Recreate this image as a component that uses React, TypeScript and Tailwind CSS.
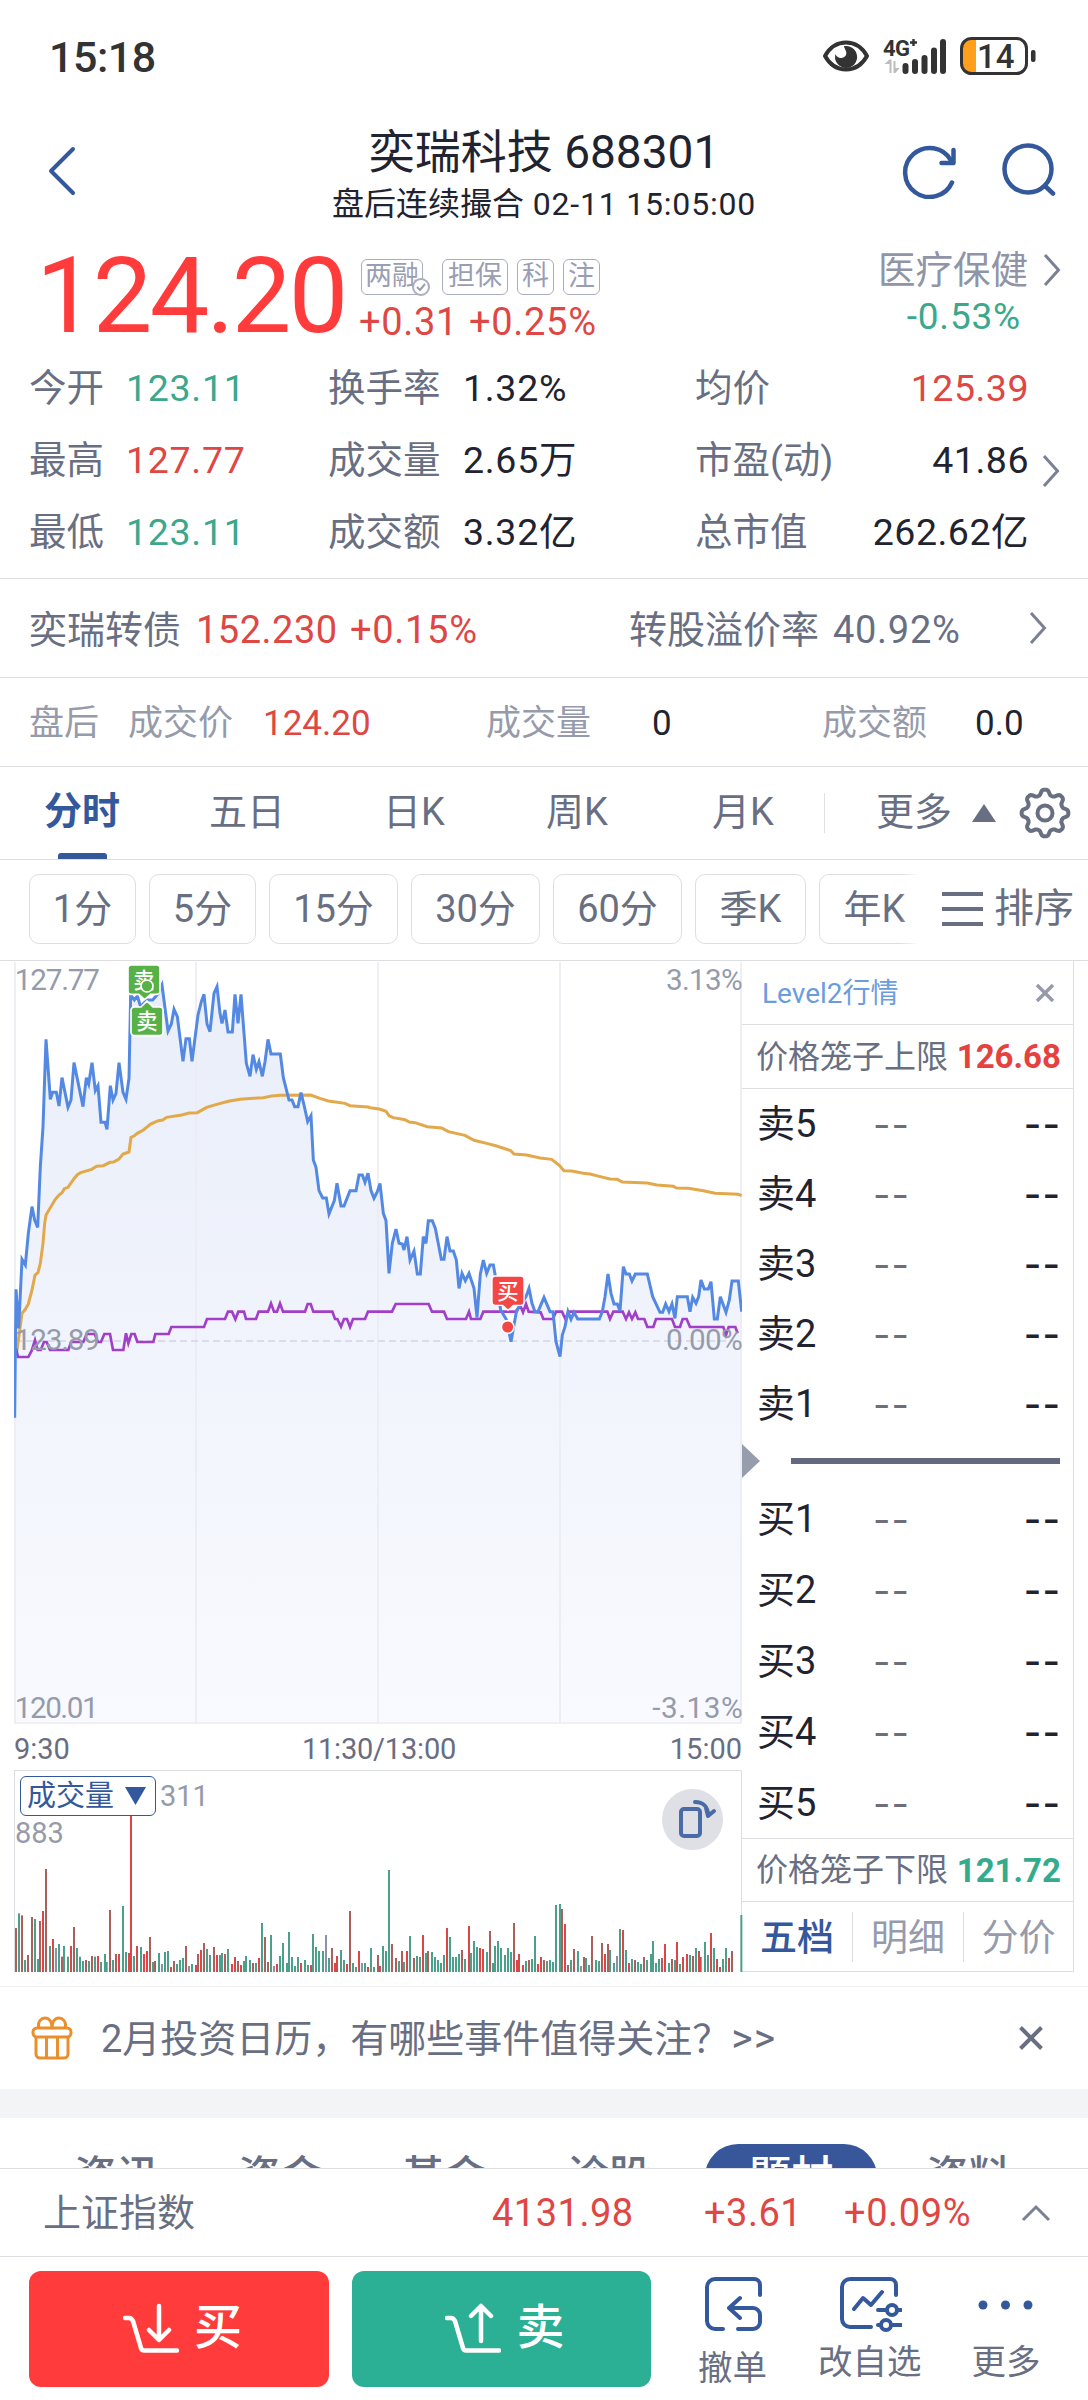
import { FC, ReactNode } from "react";

const morningPrice =
  "44,1403 48,1018 56,1135 66,928 76,945 85,850 96,770 104,810 113,832 121,650 129,530 138,268 151,448 158,427 169,427 177,468 186,383 204,472 213,450 222,338 249,470 259,383 266,402 276,338 286,422 294,407 303,517 315,517 321,538 331,407 339,450 348,430 357,338 369,427 378,448 387,385 392,135 403,150 412,138 422,170 440,150 458,150 475,130 486,105 504,243 514,222 522,178 532,200 549,334 558,266 568,266 576,334 594,195 604,155 612,133 621,222 630,245 642,130 651,110 660,190 666,220 675,180 684,246 697,246 705,133 714,220 723,133 739,340 750,379 759,314 769,358 777,335 787,379 795,335 804,268 813,312 841,312 850,383 867,450 876,450 884,470 894,470 903,428 912,465 923,515 933,497 940,630 948,652 957,722 968,744 979,744 987,792 1003,752 1011,700 1023,768 1032,768 1050,722 1068,722 1077,675 1087,675 1095,697 1104,670 1113,722";
const noonPrice =
  "12,745 22,725 30,700 40,790 48,812 57,970 67,880 78,837 87,880 97,882 102,900 111,860 120,930 132,903 142,972 151,972 160,860 168,880 175,812 187,812 196,835 214,928 222,928 231,860 240,903 250,903 259,930 267,1015 276,970 286,992 297,970 312,1015 321,1103 331,972 340,930 350,970 360,945 370,945 380,1000 392,1080 410,1110 423,1175 440,1080 455,1060 468,1040 477,1015 486,1060 495,1085 504,1085 522,1042 540,1085 549,1085 558,1175 570,1220 577,1155 585,1130 594,1085 603,1108 612,1087 623,1107 688,1107 697,1085 705,1040 714,972 723,1030 732,1062 742,1062 750,1083 760,950 768,972 778,972 786,993 796,972 832,972 848,1040 870,1087 878,1087 887,1062 897,1085 906,1062 915,1105 922,1040 952,1040 960,1085 968,1042 978,1060 986,1040 993,990 1003,1017 1015,1017 1023,995 1033,1107 1042,1107 1051,1040 1068,1087 1078,1050 1086,993 1105,993 1115,1085";
const morningAvg =
  "50,1205 58,1150 66,1090 76,1078 85,1062 96,1020 105,975 114,968 121,940 129,880 134,820 138,795 150,775 166,748 177,735 186,728 193,716 204,712 222,686 232,674 242,668 275,658 290,649 310,647 330,637 340,636 357,627 369,612 387,606 393,562 402,558 412,550 430,540 452,522 475,512 488,510 500,502 545,495 568,489 592,488 620,472 650,463 685,454 720,448 760,445 790,443 815,438 840,436 932,435 960,445 985,453 1035,460 1050,467 1105,471";
const noonAvg =
  "0,473 28,477 48,484 58,498 70,503 105,509 118,516 135,518 172,530 215,534 235,545 285,556 312,571 350,580 380,588 422,602 432,612 470,615 510,624 545,628 568,646 582,662 605,663 640,670 660,672 700,682 720,687 742,688 757,696 832,699 860,705 910,709 920,714 955,715 1000,722 1035,730 1105,733 1115,737";
const morningIndex =
  "48,1195 54,1221 85,1221 95,1202 105,1170 113,1200 122,1200 132,1176 140,1176 150,1200 205,1200 213,1176 250,1176 260,1152 284,1152 294,1176 303,1176 313,1152 330,1152 339,1200 370,1200 378,1150 385,1180 394,1152 404,1152 412,1176 460,1176 466,1152 506,1152 514,1131 612,1131 621,1107 675,1107 684,1085 696,1085 706,1108 715,1085 732,1085 738,1107 768,1107 776,1085 804,1085 813,1060 822,1085 831,1085 840,1060 849,1085 915,1085 923,1062 932,1062 940,1085 997,1085 1005,1107 1012,1107 1023,1130 1032,1107 1041,1107 1050,1131 1059,1107 1095,1107 1104,1085";
const noonIndex =
  "0,1085 66,1085 77,1062 176,1062 186,1085 222,1085 231,1107 288,1107 297,1085 303,1107 331,1107 340,1085 440,1085 450,1065 459,1087 468,1062 476,1085 512,1087 520,1107 549,1107 558,1085 576,1085 586,1107 596,1085 712,1085 720,1107 730,1085 758,1085 768,1107 777,1087 786,1107 796,1087 804,1107 823,1107 832,1131 850,1131 858,1107 906,1107 915,1131 930,1131 938,1107 950,1107 960,1131 1060,1131 1068,1155 1076,1131 1096,1131 1103,1150";

// r/d: up minutes, g: down minutes, n: flat
const morningVolume =
  "48,744d 57,700g 66,706d 75,840g 84,825d 96,711d 105,717g 114,837g 120,723d 129,693r 138,567d 150,798g 159,777r 168,804n 177,792g 186,830d 192,798g 204,830g 213,798r 222,741d 231,804g 240,830g 249,843g 258,840d 267,843g 276,828d 285,830g 294,828r 303,846g 315,822g 320,846g 330,690d 339,840g 348,822d 357,822r 369,678g 378,816g 387,819r 393,400r 402,828g 411,798r 423,801g 432,822r 441,813r 450,771d 459,846g 465,843d 477,819g 486,852n 495,816g 504,813g 513,861r 522,843d 531,852g 540,840g 549,834g 558,798d 567,858n 576,852g 588,855r 594,822d 603,810r 612,789d 621,807g 630,825g 642,801d 651,825r 660,825g 666,819g 675,822d 684,807g 696,852r 705,831r 714,843d 723,855r 732,843g 738,828g 750,840g 759,849d 768,849g 777,834r 786,729g 795,771d 804,846d 813,765g 822,858n 831,852r 840,828g 849,789g 861,849g 867,756g 876,831g 885,858g 894,831g 903,849r 915,840g 924,855g 933,855r 939,762g 948,801g 957,813g 969,813g 978,765n 987,834g 996,804d 1005,849r 1011,828r 1023,810g 1032,840g 1041,852r 1050,693d 1059,849g 1068,861g 1077,813r 1086,849n 1095,849g 1104,861r";
const noonVolume =
  "3,804g 12,861g 24,825d 30,858r 39,798g 48,813g 57,570g 66,792d 78,834d 87,843g 96,813d 102,846g 111,813r 120,768g 132,834d 141,828g 150,831g 159,765r 168,819g 174,813d 186,816g 195,831g 204,840g 213,849g 222,825g 231,744r 240,771g 249,831g 258,831g 267,822g 276,810d 285,837g 297,738r 303,819g 312,783g 321,801g 330,804r 339,807r 351,816g 360,753d 369,849g 375,798g 384,783g 393,804g 405,825g 414,804g 423,816g 432,729d 441,840r 447,822r 459,855r 468,843g 477,840d 486,837g 495,768g 504,852r 513,831r 522,840d 531,843g 540,840g 549,846g 558,675g 570,672g 576,687d 585,732r 594,855d 603,840g 612,807d 624,813g 633,858n 642,831d 648,834g 657,855g 666,768d 678,840g 687,843g 696,789d 705,822r 714,792d 720,810g 732,849g 741,828n 750,747g 759,750r 768,810g 777,849r 786,837g 795,840d 804,846g 813,852g 822,831d 831,840g 843,822g 849,783g 858,849g 867,837g 876,834d 885,792r 897,849g 906,837d 915,840g 921,786r 930,852g 939,831r 951,822r 960,825g 969,828d 978,804g 987,813r 992,831r 1005,786g 1014,825g 1023,759r 1032,804g 1041,837r 1050,861d 1059,837g 1068,804g 1077,834r 1086,813d 1114,705g";

const NOON = 1110;

const shift = (points: string) =>
  points.replace(/(\d+),/g, (_, x) => `${Number(x) + NOON},`);

const price = `${morningPrice} ${shift(noonPrice)}`;
const avg = `${morningAvg} ${shift(noonAvg)}`;
const index = `${morningIndex} ${shift(noonIndex)}`;
const volume = `${morningVolume} ${shift(noonVolume)}`.split(" ").map((item) => {
  const [x, rest] = item.split(",");
  return { x: Number(x), y: parseInt(rest, 10), kind: rest.slice(-1) };
});

const volumeColor: Record<string, string> = {
  r: "#dc4646",
  d: "#ad5f5b",
  g: "#4ba08b",
  n: "#8b93a3",
};

const gearPath = Array.from({ length: 121 }, (_, i) => {
  const a = (i / 120) * Math.PI * 2;
  const r = 20.8 + 2.8 * Math.tanh(1.6 * Math.cos(8 * a));
  return `${i ? "L" : "M"}${(27 + r * Math.sin(a)).toFixed(2)} ${(27 - r * Math.cos(a)).toFixed(2)}`;
}).join("");

const Chevron: FC<{ className?: string }> = ({ className = "" }) => (
  <svg
    viewBox="0 0 18 32"
    className={`w-[18px] h-8 shrink-0 ${className}`}
    fill="none"
    stroke="#7b8194"
    strokeWidth="3"
  >
    <path d="M2 1 L15.5 16 L2 31" />
  </svg>
);

const StatusBar = () => (
  <div className="h-[112px] flex items-center pl-[49px] pr-[52px] text-[#333]">
    <div className="text-[43px] leading-none pt-[3px] font-medium tracking-[-0.5px] grow">15:18</div>
    <svg viewBox="0 0 48 34" className="w-12 h-[34px] mr-[13px]">
      <path
        d="M3 17 C13 -1 35 -1 45 17 C35 35 13 35 3 17 Z"
        fill="none"
        stroke="#333"
        strokeWidth="4"
        strokeLinejoin="round"
      />
      <path
        d="M24 7 A11 11 0 1 1 13.5 15 C15 20 22 20 24 16 C25.500 12 22 10 22 7 Z"
        fill="#333"
      />
    </svg>
    <svg viewBox="0 0 64 38" className="w-16 h-[38px] mr-[13px]" fill="#333">
      <text x="0" y="19" fontSize="22" fontWeight="700" letterSpacing="-0.5">
        4G
      </text>
      <path d="M27 5.500h7M30.500 2v7" stroke="#333" strokeWidth="2.400" />
      <path d="M6.500 36V27h-5l5-4.500h2V36zM10.500 24v12h2l4-5h-4V24z" fill="#bdbdbd" />
      <rect x="19.500" y="26" width="6" height="11" rx="3" />
      <rect x="29" y="22" width="6" height="15" rx="3" />
      <rect x="38.500" y="18" width="6" height="19" rx="3" />
      <rect x="48" y="10.500" width="6" height="26.500" rx="3" />
      <rect x="57" y="2" width="6" height="35" rx="3" />
    </svg>
    <svg viewBox="0 0 76 38" className="w-[76px] h-[38px]">
      <path d="M11 2h5v34h-5a9 9 0 0 1-9-9V11a9 9 0 0 1 9-9z" fill="#ff9f1c" />
      <rect x="1.500" y="1.500" width="65" height="35" rx="10" fill="none" stroke="#333" strokeWidth="3" />
      <rect x="71" y="13" width="4.500" height="12" rx="2" fill="#333" />
      <text x="17" y="30.500" fontSize="33" fontWeight="500" fill="#333">
        14
      </text>
    </svg>
  </div>
);

const Header = () => (
  <div className="h-[128px] flex items-start text-[#1f2430]">
    <svg
      viewBox="0 0 30 52"
      className="w-[30px] h-[52px] ml-[47px] mt-[33px]"
      fill="none"
      stroke="#34589c"
      strokeWidth="4"
      strokeLinecap="round"
      strokeLinejoin="round"
    >
      <path d="M26 4 L4 26 L26 48" />
    </svg>
    <div className="w-[824px] pl-[110px] text-center">
      <div className="w-[714px] pt-[17px] text-[46px] leading-[46px]">奕瑞科技 688301</div>
      <div className="w-[714px] pt-[12px] text-[32px] leading-[34px]">
        盘后连续撮合<span className="tracking-[0.8px]"> 02-11 15:05:00</span>
      </div>
    </div>
    <svg
      viewBox="0 0 56 54"
      className="w-14 h-[54px] mt-[33px]"
      fill="none"
      stroke="#34589c"
      strokeWidth="4.500"
    >
      <path d="M51 37.500 A24.500 24.500 0 1 1 50 15.500" strokeLinecap="round" />
      <path d="M52.500 5v13H40.500" strokeLinecap="round" strokeLinejoin="round" />
    </svg>
    <svg
      viewBox="0 0 56 54"
      className="w-14 h-[54px] ml-[43px] mt-[30px]"
      fill="none"
      stroke="#34589c"
      strokeWidth="4.500"
      strokeLinecap="round"
    >
      <circle cx="28" cy="27" r="23.500" />
      <path d="M45 44l8 7.500" />
    </svg>
  </div>
);

const Tag: FC<{ className: string; children: ReactNode }> = ({ className, children }) => (
  <div
    className={`relative h-9 border-[1.5px] border-[#a9adbf] rounded-[6px] text-[27px] leading-[33px] text-center whitespace-nowrap text-[#9a9eb3] ${className}`}
  >
    {children}
  </div>
);

const Price = () => (
  <div className="h-[112px] flex">
    <div className="w-[359px] pl-[36px] text-[106px] leading-[112px] text-[#ff3b3b] tracking-[-2.700px]">
      124.20
    </div>
    <div className="grow pt-[19px]">
      <div className="flex pl-[2px]">
        <Tag className="w-[62px] mr-[19px]">
          两融
          <svg viewBox="0 0 20 20" className="absolute w-5 h-5 -right-[9px] -bottom-[3px]">
            <circle cx="10" cy="10" r="8" fill="#fff" stroke="#a9adbf" strokeWidth="2" />
            <path d="M6 10l3 3 5-6" fill="none" stroke="#9a9eb3" strokeWidth="2" />
          </svg>
        </Tag>
        <Tag className="w-[66px] mr-[9px]">担保</Tag>
        <Tag className="w-[37px] mr-[9px]">科</Tag>
        <Tag className="w-[37px]">注</Tag>
      </div>
      <div className="flex pt-[8px] text-[38px] leading-[38px] tracking-[0.700px] text-[#de4744]">
        <div className="w-[110px]">+0.31</div>
        <div>+0.25%</div>
      </div>
    </div>
    <div className="pt-[11px] flex flex-col items-end shrink-0 whitespace-nowrap">
      <div className="flex items-center text-[37.500px] leading-[38px] text-[#8f94a6]">
        医疗保健
        <Chevron className="ml-[15px] mr-[27px]" />
      </div>
      <div className="pt-[9px] pr-[67px] text-[37px] leading-[38px] tracking-[0.800px] text-[#3ba88c]">
        -0.53%
      </div>
    </div>
  </div>
);

const green = "text-[#3ba88c]";
const red = "text-[#de4744]";

const stats = [
  [["今开", "123.11", green], ["换手率", "1.32%", ""], ["均价", "125.39", red]],
  [["最高", "127.77", red], ["成交量", "2.65万", ""], ["市盈(动)", "41.86", ""]],
  [["最低", "123.11", green], ["成交额", "3.32亿", ""], ["总市值", "262.62亿", ""]],
];

const Stats = () => (
  <div className="h-[227px] pb-[9px] flex items-center border-b border-[#dcdee2] text-[37.500px] text-[#1f2430]">
    <div className="w-[1029px]">
      {stats.map(([a, b, c]) => (
        <div key={a[0]} className="h-[72px] flex items-center leading-none">
          <span className="w-[126px] pl-[29px] text-[#696f83]">{a[0]}</span>
          <span className={`w-[202px] tracking-[0.700px] ${a[2]}`}>{a[1]}</span>
          <span className="w-[135px] text-[#696f83]">{b[0]}</span>
          <span className="w-[232px] tracking-[0.700px]">{b[1]}</span>
          <span className="text-[#696f83] grow">{c[0]}</span>
          <span className={`tracking-[0.500px] ${c[2]}`}>{c[1]}</span>
        </div>
      ))}
    </div>
    <Chevron className="ml-[13px] mt-5" />
  </div>
);

const Bond = () => (
  <div className="h-[99px] flex items-center border-b border-[#dcdee2] text-[38px] leading-none text-[#696f83]">
    <span className="w-[196px] pt-[3px] pl-[29px]">奕瑞转债</span>
    <span className={`w-[154px] pt-[3px] tracking-[0.500px] ${red}`}>152.230</span>
    <span className={`w-[279px] pt-[3px] tracking-[0.700px] ${red}`}>+0.15%</span>
    <span className="w-[204px] pt-[3px]">转股溢价率</span>
    <span className="w-[196px] pt-[3px] tracking-[0.700px]">40.92%</span>
    <Chevron />
  </div>
);

const AfterHours = () => (
  <div className="h-[89px] pt-[2px] flex items-center border-b border-[#dcdee2] text-[35px] leading-none text-[#969bab]">
    <span className="w-[128px] pl-[29px]">盘后</span>
    <span className="w-[135px]">成交价</span>
    <span className={`w-[223px] ${red}`}>124.20</span>
    <span className="w-[166px]">成交量</span>
    <span className="w-[170px] text-[#1f2430]">0</span>
    <span className="w-[153px]">成交额</span>
    <span className="text-[#1f2430]">0.0</span>
  </div>
);

const ChartTabs = () => (
  <div className="h-[93px] flex items-center border-b border-[#dcdee2] text-[38px] leading-none text-[#696f83]">
    <div className="w-[165px] h-full pl-[44px] font-bold text-[#34589c] flex flex-col justify-between">
      <div className="pt-[25px]">分时</div>
      <div className="w-[49px] h-[6px] ml-[14px] rounded-t-[3px] bg-[#34589c]" />
    </div>
    <div className="w-[176px] pb-[2px] pl-[44px]">五日</div>
    <div className="w-[163px] pb-[2px] pl-[42px]">日K</div>
    <div className="w-[165px] pb-[2px] pl-[42px]">周K</div>
    <div className="w-[155px] pb-[2px] pl-[43px]">月K</div>
    <div className="w-px h-10 bg-[#dfe1e5]" />
    <div className="pb-[2px] pl-[51px]">更多</div>
    <svg viewBox="0 0 24 18" className="w-6 h-[18px] ml-[20px]">
      <path d="M12 0 L24 18 H0 Z" fill="#696f83" />
    </svg>
    <svg viewBox="0 0 54 54" className="w-[54px] h-[54px] ml-[22px]" fill="none" stroke="#696f83" strokeWidth="4">
      <path d={gearPath} strokeLinejoin="round" />
      <circle cx="27" cy="27" r="7.500" />
    </svg>
  </div>
);

const periods = [
  ["1分", "w-[107px]"],
  ["5分", "w-[107px]"],
  ["15分", "w-[129px]"],
  ["30分", "w-[129px]"],
  ["60分", "w-[129px]"],
  ["季K", "w-[111px]"],
  ["年K", "w-[111px]"],
];

const Periods = () => (
  <div className="h-[101px] pb-[3px] flex items-center border-b border-[#dcdee2] text-[38px] leading-none text-[#696f83]">
    <div className="relative w-[920px] pl-[29px] flex gap-[13px] overflow-hidden">
      {periods.map(([label, width]) => (
        <div
          key={label}
          className={`${width} h-[70px] shrink-0 border border-[#dcdee3] rounded-[10px] flex items-center justify-center`}
        >
          {label}
        </div>
      ))}
      <div className="absolute right-0 top-0 w-5 h-full bg-linear-to-r from-white/0 to-white" />
    </div>
    <div className="w-[41px] h-[34px] ml-[22px] flex flex-col justify-between">
      <div className="h-1 bg-[#696f83]" />
      <div className="h-1 bg-[#696f83]" />
      <div className="h-1 bg-[#696f83]" />
    </div>
    <div className="ml-[11px] text-[40px] whitespace-nowrap">排序</div>
  </div>
);

const PriceChart = () => (
  <svg viewBox="42 33 2184 2289" className="block w-[728px] h-[763px] ml-[14px]">
    <defs>
      <linearGradient id="area" x1="0" y1="0" x2="0" y2="1">
        <stop offset="0" stopColor="#e9eef9" />
        <stop offset="1" stopColor="#f9faff" />
      </linearGradient>
    </defs>
    <polygon points={`${price} 2226,2319 44,2319`} fill="url(#area)" />
    <g stroke="#ebecf1" strokeWidth="5">
      <path d="M45 36V2319M588 36V2319M1134 36V2319M1680 36V2319M2223 36V2319M42 2319H2226" />
    </g>
    <path d="M45 1173H2222" stroke="#d1d4e3" strokeWidth="5" strokeDasharray="21 12" />
    <g fill="none" strokeWidth="9">
      <polyline points={avg} stroke="#e2a84a" />
      <polyline points={index} stroke="#a23fc9" strokeWidth="8" />
      <polyline points={price} stroke="#5489e3" />
    </g>
    <g fontSize="89" fill="#969bab">
      <text x="44" y="120" textLength="256">127.77</text>
      <text x="44" y="1199" textLength="256">123.89</text>
      <text x="44" y="2304" textLength="252">120.01</text>
      <text x="1998" y="120" textLength="230">3.13%</text>
      <text x="1998" y="1199" textLength="230">0.00%</text>
      <text x="1957" y="2304" textLength="271">-3.13%</text>
    </g>
    <g stroke="#fff" strokeWidth="5" fill="#57b147">
      <path d="M394 45h76a10 10 0 0 1 10 10v68a10 10 0 0 1-10 10h-18l-18 16-18-16h-22a10 10 0 0 1-10-10v-68a10 10 0 0 1 10-10z" />
      <path d="M403 171h20l18-18 18 18h20a10 10 0 0 1 10 10v66a10 10 0 0 1-10 10h-76a10 10 0 0 1-10-10v-66a10 10 0 0 1 10-10z" />
    </g>
    <g fill="#fff" fontSize="64" fontWeight="500" textAnchor="middle">
      <text x="432" y="113">卖</text>
      <text x="441" y="238">卖</text>
    </g>
    <circle cx="441" cy="108" r="18" fill="#57b147" stroke="#fff" strokeWidth="5" />
    <path
      d="M1486 978h76a10 10 0 0 1 10 10v68a10 10 0 0 1-10 10h-22l-16 15-16-15h-22a10 10 0 0 1-10-10v-68a10 10 0 0 1 10-10z"
      fill="#f54646"
      stroke="#fff"
      strokeWidth="4"
    />
    <text x="1524" y="1046" fill="#fff" fontSize="64" fontWeight="500" textAnchor="middle">
      买
    </text>
    <circle cx="1523" cy="1131" r="19" fill="#f54646" stroke="#fff" strokeWidth="5" />
  </svg>
);

const VolumeChart = () => (
  <div className="relative ml-[14px] w-[728px] h-[202px] border-x border-t border-[#dcdee2]">
    <svg viewBox="45 273 2178 603" className="block w-[726px] h-[201px] overflow-visible">
      {volume.map(({ x, y, kind }) => (
        <rect key={x} x={x - 3} y={y} width="6" height={876 - y} fill={volumeColor[kind]} />
      ))}
    </svg>
    <div className="absolute left-[5px] top-[5px] flex items-center w-[136px] h-[40px] pl-[6px] border-[1.5px] border-[#34589c] rounded-[6px] bg-white text-[29px] leading-none text-[#34589c]">
      成交量
      <svg viewBox="0 0 21 18" className="w-[21px] h-[18px] ml-[11px]">
        <path d="M0 0h21L10.500 18z" fill="#34589c" />
      </svg>
    </div>
    <div className="absolute left-[145px] top-[11px] text-[29px] leading-none text-[#969bab]">311</div>
    <div className="absolute left-0 top-[48px] text-[29px] leading-none text-[#969bab]">883</div>
    <div className="absolute right-[18px] top-[18px] w-[61px] h-[61px] rounded-full bg-[#dfe0e6]">
      <svg
        viewBox="0 0 61 61"
        className="w-[61px] h-[61px]"
        fill="none"
        stroke="#4a6ba5"
        strokeWidth="4"
        strokeLinecap="round"
        strokeLinejoin="round"
      >
        <rect x="19" y="20" width="19" height="27" rx="3" />
        <path d="M33 13c8 0 13 5 13 13M44 19l2 8 6-5" />
      </svg>
    </div>
  </div>
);

const Level: FC<{ label: string; height: string }> = ({ label, height }) => (
  <div className={`${height} flex items-center pl-[15px] pr-[12px] text-[38px] leading-none text-[#1f2430]`}>
    <span className="w-[116px]">{label}</span>
    <span className="font-['Inter'] tracking-[1px] grow text-[#6f6d7a]">--</span>
    <span className="font-['Inter'] tracking-[1px] font-medium">--</span>
  </div>
);

const OrderBook = () => (
  <div className="w-[332px] h-[1011px] border-r border-b border-[#dcdee2]">
    <div className="h-[64px] flex items-center justify-between pl-[20px] pr-[18px] border-b border-[#dcdee2] text-[28px] leading-none text-[#6a9de0]">
      <span className="pt-[2px]">Level2行情</span>
      <svg viewBox="0 0 20 20" className="w-5 h-5" stroke="#969bab" strokeWidth="3.500">
        <path d="M2 2l16 16M18 2L2 18" />
      </svg>
    </div>
    <div className="h-[64px] flex items-center justify-between pl-[14px] pr-[12px] border-b border-[#dcdee2] text-[32px] leading-none text-[#696f83]">
      价格笼子上限
      <b className="text-[33px] text-[#e5423f]">126.68</b>
    </div>
    {["卖5", "卖4", "卖3", "卖2", "卖1"].map((label) => (
      <Level key={label} label={label} height="h-[70px]" />
    ))}
    <div className="h-[44px] flex items-center">
      <svg viewBox="0 0 18 34" className="w-[18px] h-[34px]">
        <path d="M0 0L18 17L0 34z" fill="#969eae" />
      </svg>
      <div className="ml-[31px] w-[269px] h-[6px] bg-[#63687f]" />
    </div>
    {["买1", "买2", "买3", "买4", "买5"].map((label) => (
      <Level key={label} label={label} height="h-[71px]" />
    ))}
    <div className="h-[64px] flex items-center justify-between pl-[14px] pr-[12px] border-y border-[#dcdee2] text-[32px] leading-none text-[#696f83]">
      价格笼子下限
      <b className="text-[33px] text-[#35ab8e]">121.72</b>
    </div>
    <div className="h-[69px] flex items-center text-[37px] leading-none text-[#969bab]">
      <div className="w-[110px] pt-[3px] pl-[18px] font-medium text-[#34589c]">五档</div>
      <div className="w-[112px] h-[50px] leading-[53px] text-center border-x border-[#dcdee2]">明细</div>
      <div className="w-[109px] pt-[3px] text-center">分价</div>
    </div>
  </div>
);

const Banner = () => (
  <div className="mt-[14px] h-[103px] flex items-center border-t border-[#f0f1f4] text-[38px] leading-none text-[#696f83]">
    <svg
      viewBox="0 0 42 44"
      className="w-[42px] h-11 ml-[31px]"
      fill="none"
      stroke="#ea8f2b"
      strokeWidth="3"
      strokeLinejoin="round"
    >
      <rect x="2" y="12" width="38" height="9" rx="4" />
      <path d="M5 21v17a4 4 0 0 0 4 4h24a4 4 0 0 0 4-4V21M15.500 21v21M26.500 21v21" />
      <path d="M8 12C6 5 11 2 14 2c5 0 7 5 7 10 0-5 2-10 7-10 3 0 8 3 6 10" />
    </svg>
    <div className="ml-[28px] grow whitespace-nowrap">
      2月投资日历，有哪些事件值得关注？<span className="text-[41px] tracking-[1px] ml-px">&gt;&gt;</span>
    </div>
    <svg viewBox="0 0 24 24" className="w-6 h-6 mr-[45px]" stroke="#696f83" strokeWidth="4">
      <path d="M1.500 1.500l21 21M22.500 1.500l-21 21" />
    </svg>
  </div>
);

const InfoTabs = () => (
  <div className="h-[50px] overflow-hidden">
    <div className="flex pt-[26px] pl-[34px] text-[42.500px] leading-[65px] font-medium text-[#696f83]">
      {["资讯", "资金", "基金", "诊股", "题材", "资料"].map((tab) => (
        <div
          key={tab}
          className={
            tab === "题材"
              ? "w-[172px] ml-[15px] mr-[9px] h-[66px] rounded-[33px] bg-[#38579b] text-white text-center"
              : "w-[164px] pl-[40px]"
          }
        >
          {tab}
        </div>
      ))}
    </div>
  </div>
);

const IndexBar = () => (
  <div className="h-[89px] flex items-center border-y border-[#dcdee2] text-[38px] leading-none text-[#696f83]">
    <span className="w-[492px] pl-[43px]">上证指数</span>
    <span className={`w-[212px] tracking-[0.500px] ${red}`}>4131.98</span>
    <span className={`w-[140px] tracking-[0.500px] ${red}`}>+3.61</span>
    <span className={`w-[177px] tracking-[0.600px] ${red}`}>+0.09%</span>
    <svg viewBox="0 0 30 18" className="w-[30px] h-[18px]" fill="none" stroke="#7b8194" strokeWidth="3">
      <path d="M2 16L15 3l13 13" />
    </svg>
  </div>
);

const TradeBar = () => (
  <div className="h-[143px] flex items-start pl-[29px] pt-[14px] text-[34.500px] leading-none text-[#696f83]">
    <button className="w-[300px] h-[116px] pl-[7px] pb-[2px] rounded-[12px] bg-[#ff3b3b] flex items-center justify-center gap-[15px] text-[48px] font-medium text-white">
      <svg viewBox="0 0 56 50" className="w-14 h-[50px]" fill="none" stroke="#fff" strokeWidth="4.500" strokeLinecap="round" strokeLinejoin="round">
        <path d="M2 15h4c2 0 3 1 4 3l8 27c.6 2 1.500 2.500 3 2.500h33M36 3v33M26 27l10 10 10-10" />
      </svg>
      买
    </button>
    <button className="ml-[23px] w-[299px] h-[116px] pl-[7px] pb-[2px] rounded-[12px] bg-[#2cb095] flex items-center justify-center gap-[15px] text-[48px] font-medium text-white">
      <svg viewBox="0 0 56 50" className="w-14 h-[50px]" fill="none" stroke="#fff" strokeWidth="4.500" strokeLinecap="round" strokeLinejoin="round">
        <path d="M2 15h4c2 0 3 1 4 3l8 27c.6 2 1.500 2.500 3 2.500h33M36 38V4M26 13L36 3l10 10" />
      </svg>
      卖
    </button>
    <div className="ml-[47px] mt-[5px] flex flex-col items-center">
      <svg viewBox="0 0 60 58" className="w-[60px] h-[58px]" fill="none" stroke="#34589c" strokeWidth="4" strokeLinecap="round" strokeLinejoin="round">
        <path d="M20 53h-8a8 8 0 0 1-8-8V11a8 8 0 0 1 8-8h39a6 6 0 0 1 6 6v10M35 53h15a7 7 0 0 0 7-7V39a7 7 0 0 0-7-7H26M37 22L26 32l11 10" />
      </svg>
      <div className="mt-[17px]">撤单</div>
    </div>
    <div className="ml-[51px] mt-[5px] flex flex-col items-center">
      <svg viewBox="0 0 64 58" className="w-16 h-[58px]" fill="none" stroke="#34589c" strokeWidth="4" strokeLinecap="round" strokeLinejoin="round">
        <path d="M33 51H12a8 8 0 0 1-8-8V11a8 8 0 0 1 8-8h40a6 6 0 0 1 6 6v10M16 33l9-11 8 7 11-13M40 34h8M60 34h3M40 49h2M54 49h9" />
        <circle cx="54" cy="34" r="5" />
        <circle cx="48" cy="49" r="5" />
      </svg>
      <div className="mt-[11px]">改自选</div>
    </div>
    <div className="ml-[50px] mt-[5px] flex flex-col items-center">
      <svg viewBox="0 0 60 58" className="w-[60px] h-[58px]" fill="#34589c">
        <circle cx="7" cy="29" r="4.500" />
        <circle cx="29.500" cy="29" r="4.500" />
        <circle cx="52" cy="29" r="4.500" />
      </svg>
      <div className="mt-[11px]">更多</div>
    </div>
  </div>
);

export default function App() {
  return (
    <div className="w-[1088px] h-[2400px] overflow-hidden bg-white font-['Roboto','Noto_Sans_CJK_SC',sans-serif]">
      <StatusBar />
      <Header />
      <Price />
      <Stats />
      <Bond />
      <AfterHours />
      <ChartTabs />
      <Periods />
      <div className="flex">
        <div className="w-[742px]">
          <PriceChart />
          <div className="h-[46px] pl-[14px] pt-[5px] flex items-center text-[29px] leading-none text-[#696d82]">
            <span className="w-[244px]">9:30</span>
            <span className="w-[242px] text-center tracking-[-0.200px]">11:30/13:00</span>
            <span className="w-[242px] text-right">15:00</span>
          </div>
          <VolumeChart />
        </div>
        <OrderBook />
      </div>
      <Banner />
      <div className="h-[29px] bg-[#f3f4f6]" />
      <InfoTabs />
      <IndexBar />
      <TradeBar />
    </div>
  );
}
